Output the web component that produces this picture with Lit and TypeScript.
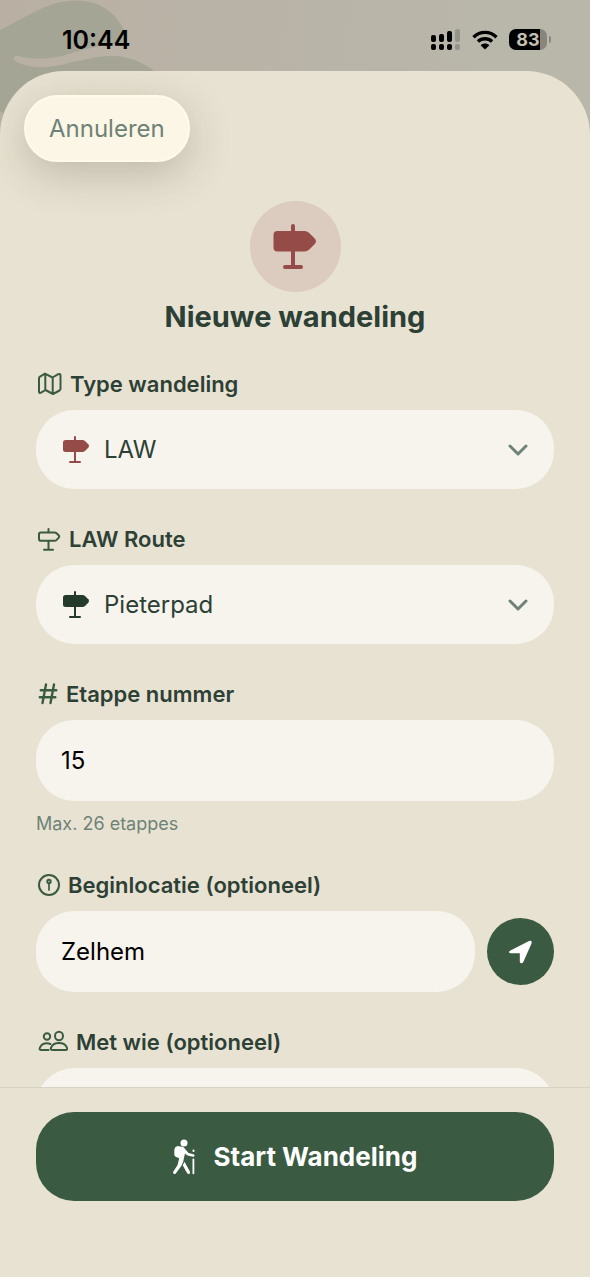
import { LitElement, html, css, svg } from "lit";
import { customElement, state } from "lit/decorators.js";

const signpostFill = (cls: string) => html`
  <svg class=${cls} viewBox="0 0 44 46" fill="currentColor" aria-hidden="true">
    <rect x="18" y="0" width="4" height="44" rx="2"></rect>
    <rect x="10" y="41" width="20" height="4" rx="2"></rect>
    <path d="M4.500 7H31.500Q34 7 36 8.800L41.500 14.200Q44.500 17.200 41.500 20.200L36 25.800Q34 27.500 31.500 27.500H4.500Q.5 27.500 .5 23.500V11Q.5 7 4.500 7Z"></path>
  </svg>
`;

const signpostSmall = (cls: string) => html`
  <svg class=${cls} viewBox="0 0 28 28" fill="currentColor" aria-hidden="true">
    <rect x="12" y="0" width="2" height="27" rx="1"></rect>
    <rect x="7" y="25" width="12" height="2" rx="1"></rect>
    <path d="M3.500 4H20.500Q22 4 23 4.900L26.300 8.200Q27.900 10 26.300 11.800L23 15.100Q22 16 20.500 16H3.500Q1 16 1 13.500V6.500Q1 4 3.500 4Z"></path>
  </svg>
`;

const icons = {
  map: svg`<path d="M3 7.500Q3 6.300 4 5.700L9 2.600L16.500 6.500L22.300 3.200Q24.500 2.300 24.500 4.500V17.700Q24.500 18.900 23.500 19.500L17 23L9.500 19L5 21.700Q3 22.600 3 20.500ZM9.300 3V19M16.700 6.500V22.500"></path>`,
  signpost: svg`<path d="M4.800 6.500H18.500Q19.700 6.500 20.600 7.300L22.600 9.300Q23.800 10.600 22.600 11.900L20.600 13.900Q19.700 14.700 18.500 14.700H4.800Q3 14.700 3 12.900V8.300Q3 6.500 4.800 6.500ZM12.500 3V6M12.500 15V23.500M8 23.700H17"></path>`,
  hash: svg`<path d="M10 3.500L6.500 22M18 3.500L14.500 22M4.800 9.300H20.300M3.800 16.200H19.300" stroke-width="2.400"></path>`,
  pin: svg`<circle cx="13" cy="13" r="10"></circle><circle cx="13" cy="9.500" r="1.700"></circle><path d="M13 11.500V18" stroke-width="1.700"></path>`,
  people: svg`<circle cx="11" cy="7.500" r="3.200"></circle><ellipse cx="23" cy="7" rx="4" ry="4.200"></ellipse><path d="M12.500 21H5Q3.200 21 3.800 19C5 15.800 8 14.300 11 14.300Q12.800 14.300 14.300 15M16.500 21Q14.200 21 15 18.800C16.200 15.700 19.200 14 23 14S29.800 15.700 31 18.800Q31.800 21 29.500 21Z"></path>`,
};

@customElement("app-root")
export class AppRoot extends LitElement {
  @state() private stage = "15";
  @state() private start = "Zelhem";

  static styles = css`
    :host {
      --ink: #2d4035;
      --green: #3a5a42;
      --muted: #6e8277;
      --sheet: #e8e2d2;
      --field: #f7f4ed;
      --red: #954c49;
      display: flex;
      flex-direction: column;
      position: relative;
      height: 100vh;
      overflow: hidden;
      background: linear-gradient(100deg, #b9b0a3, #b9b6aa 60%);
      font-family: Inter, "Noto Sans", sans-serif;
      color: var(--ink);
    }
    *, *::before { box-sizing: border-box; }
    svg { display: block; flex: none; }
    button, input, select { font: inherit; color: inherit; border: 0; margin: 0; }
    .landscape { position: absolute; top: 0; left: 0; width: 160px; height: 150px; }
    .status {
      position: relative;
      flex: none;
      display: flex;
      align-items: center;
      justify-content: space-between;
      height: 71px;
      padding: 8px 39px 0 62px;
      color: #000;
    }
    .time { font-size: 25px; font-weight: 600; }
    .indicators { display: flex; align-items: center; gap: 11px; }
    .battery { display: flex; align-items: center; gap: 2px; }
    .level {
      width: 38px;
      height: 21px;
      border-radius: 7px;
      background: linear-gradient(90deg, #000 31px, #87857c 31px);
      color: #c4c0b4;
      font-size: 18px;
      font-weight: 700;
      line-height: 21px;
      text-align: center;
    }
    .tip { width: 2px; height: 7px; border-radius: 0 2px 2px 0; background: #87857c; }
    .sheet {
      position: relative;
      flex: 1;
      min-height: 0;
      display: flex;
      flex-direction: column;
      overflow: hidden;
      border-radius: 64px 64px 0 0;
      background: var(--sheet);
    }
    .content {
      flex: 1;
      min-height: 0;
      overflow-y: auto;
      scrollbar-width: none;
      padding: 24px 36px 36px;
    }
    .cancel {
      display: block;
      height: 67px;
      margin-left: -12px;
      padding: 0 23px;
      border: 2px solid #fffbe9;
      border-radius: 34px;
      background: #fbf6e5;
      color: var(--muted);
      font-size: 24px;
      box-shadow: 0 12px 44px rgba(60, 55, 40, 0.24);
    }
    .hero { display: flex; flex-direction: column; align-items: center; gap: 7px; margin: 39px 0 35px; }
    .badge {
      display: grid;
      place-items: center;
      width: 91px;
      height: 91px;
      border-radius: 50%;
      background: #dccbbf;
      color: var(--red);
    }
    .large { width: 44px; height: 46px; }
    h1 { margin: 0; font-size: 29px; line-height: 36px; font-weight: 700; }
    form { display: flex; flex-direction: column; gap: 36px; }
    .group { display: flex; flex-direction: column; gap: 12px; }
    label { display: flex; align-items: center; gap: 8px; font-size: 22px; line-height: 28px; font-weight: 600; }
    .icon { height: 26px; fill: none; stroke: var(--green); stroke-width: 2; stroke-linecap: round; stroke-linejoin: round; }
    .field {
      width: 100%;
      min-width: 0;
      border-radius: 38px;
      background: var(--field);
      font-size: 24px;
      outline-color: var(--green);
    }
    input.field { height: 81px; padding: 0 25px; color: #000; }
    select.field { grid-area: 1 / 1 / 2 / 4; height: 79px; padding: 0 68px; appearance: none; }
    .picker { display: grid; grid-template-columns: 28px 1fr 20px; align-items: center; padding: 0 26px; }
    .picker select { margin: 0 -26px; width: auto; }
    .picker svg { grid-row: 1; pointer-events: none; z-index: 1; }
    .small { grid-column: 1; width: 28px; height: 28px; }
    .red { color: var(--red); }
    .dark { color: #243a2b; }
    .chevron { grid-column: 3; width: 20px; height: 12px; fill: none; stroke: var(--muted); stroke-width: 3; stroke-linecap: round; stroke-linejoin: round; }
    .help { margin: 0; color: var(--muted); font-size: 18px; line-height: 22px; }
    .row { display: flex; align-items: center; gap: 12px; }
    .locate {
      flex: none;
      display: grid;
      place-items: center;
      width: 67px;
      height: 67px;
      padding: 0;
      border-radius: 50%;
      background: var(--green);
      color: #fff;
    }
    footer { flex: none; padding: 24px 36px 76px; border-top: 1px solid #d7d2c4; background: var(--sheet); }
    .submit {
      display: flex;
      align-items: center;
      justify-content: center;
      gap: 17px;
      width: 100%;
      height: 89px;
      border-radius: 38px;
      background: var(--green);
      color: #fff;
      font-size: 26px;
      font-weight: 700;
    }
  `;

  private label(target: string, icon: unknown, width: number, text: string) {
    return html`<label for=${target}>
      <svg class="icon" width=${width} height="26" viewBox="0 0 ${width} 26" aria-hidden="true">${icon}</svg>${text}
    </label>`;
  }

  private picker(id: string, tone: string, options: string[]) {
    return html`<div class="picker">
      <select class="field" id=${id}>${options.map((o) => html`<option>${o}</option>`)}</select>
      ${signpostSmall(`small ${tone}`)}
      <svg class="chevron" viewBox="0 0 20 12" aria-hidden="true"><path d="M2 2L10 10L18 2"></path></svg>
    </div>`;
  }

  render() {
    return html`
      <svg class="landscape" viewBox="0 0 160 150" fill="#a5a596" aria-hidden="true">
        <path d="M0 30C30 15 50 0 77 .5C100 1 115 12 124 30C129 39 128 43 119 44C98 45 78 51 62 56C45 60 28 59 18 56C13 55 12 60 17 62C30 68 42 68 55 66C80 61 95 56 112 56C130 56 143 63 154 71L60 150L0 111Z"></path>
      </svg>
      <div class="status">
        <span class="time">10:44</span>
        <div class="indicators">
          <svg width="30" height="21" viewBox="0 0 30 21" aria-hidden="true">
            <rect x="0" y="6" width="5" height="7" rx="2"></rect><rect x="8" y="5" width="5" height="8" rx="2"></rect>
            <rect x="16" y="2" width="5" height="11" rx="2"></rect>
            <rect x="0" y="15" width="5" height="6" rx="2"></rect><rect x="8" y="15" width="5" height="6" rx="2"></rect>
            <rect x="16" y="15" width="5" height="6" rx="2"></rect>
            <g fill="#96938a"><rect x="24" y="0" width="5" height="13" rx="2"></rect><rect x="24" y="15" width="5" height="6" rx="2"></rect></g>
          </svg>
          <svg width="26" height="20" viewBox="0 0 26 20" fill="none" stroke="#000" stroke-width="3.400" aria-hidden="true">
            <path d="M1.500 7.200C8 .8 18 .8 24.500 7.200"></path><path d="M5.900 11.600C10 7.800 16 7.800 20.100 11.600"></path>
            <path d="M13 19.500L8.600 15.200C11 12.900 15 12.900 17.400 15.200Z" fill="#000" stroke="none"></path>
          </svg>
          <div class="battery"><span class="level">83</span><span class="tip"></span></div>
        </div>
      </div>
      <main class="sheet">
        <div class="content">
          <button class="cancel" type="button">Annuleren</button>
          <header class="hero">
            <div class="badge">${signpostFill("large")}</div>
            <h1>Nieuwe wandeling</h1>
          </header>
          <form id="walk" @submit=${(e: Event) => e.preventDefault()}>
            <div class="group">
              ${this.label("type", icons.map, 26, "Type wandeling")}
              ${this.picker("type", "red", ["LAW"])}
            </div>
            <div class="group">
              ${this.label("route", icons.signpost, 25, "LAW Route")}
              ${this.picker("route", "dark", ["Pieterpad"])}
            </div>
            <div class="group">
              ${this.label("stage", icons.hash, 22, "Etappe nummer")}
              <input class="field" id="stage" inputmode="numeric" aria-describedby="stage-help" .value=${this.stage}
                @input=${(e: Event) => (this.stage = (e.target as HTMLInputElement).value)} />
              <p class="help" id="stage-help">Max. 26 etappes</p>
            </div>
            <div class="group">
              ${this.label("start", icons.pin, 24, "Beginlocatie (optioneel)")}
              <div class="row">
                <input class="field" id="start" .value=${this.start}
                  @input=${(e: Event) => (this.start = (e.target as HTMLInputElement).value)} />
                <button class="locate" type="button" aria-label="Huidige locatie">
                  <svg width="26" height="26" viewBox="0 0 26 26" fill="currentColor" aria-hidden="true">
                    <path d="M2 11.800L21 2Q24.500 1 23.500 4.400L15.300 23Q14.300 24.800 12.700 24Q11.800 23.500 11.800 22.400V14.300H3Q1.200 14.200 1 13.200Q.9 12.400 2 11.800Z"></path>
                  </svg>
                </button>
              </div>
            </div>
            <div class="group">
              ${this.label("company", icons.people, 32, "Met wie (optioneel)")}
              <input class="field" id="company" />
            </div>
          </form>
        </div>
        <footer>
          <button class="submit" type="submit" form="walk">
            <svg width="24" height="36" viewBox="0 0 24 36" fill="currentColor" aria-hidden="true">
              <circle cx="11" cy="4" r="3.500"></circle>
              <path d="M4 7.200Q5.500 6.600 6.700 7.600Q8.800 7 10.600 8.200L15.500 14L20.500 15.300Q21.800 15.900 21.500 17Q21.100 18 20 17.700L14.600 16.600Q13.800 16.300 13.200 15.600L12 14.400L10.900 19.200Q10.500 23.500 8.600 26.500L3 34.200Q1.900 35.600 .7 34.700Q-.4 33.800 .4 32.400L4.600 26L6.200 19.300L3.200 18Q1.300 17.200 1.300 15.500V10.700Q1.400 8 4 7.200Z"></path>
              <path d="M11.500 22.800L16.900 32.500Q17.600 34.200 16.200 34.900Q14.800 35.400 13.900 33.800L9.700 26.300Q10.900 24.700 11.500 22.800Z"></path>
              <rect x="19.500" y="10.500" width="2" height="2.600" rx="1"></rect>
              <rect x="19.500" y="19.500" width="1.800" height="15.700" rx=".9"></rect>
            </svg>
            Start Wandeling
          </button>
        </footer>
      </main>
    `;
  }
}
